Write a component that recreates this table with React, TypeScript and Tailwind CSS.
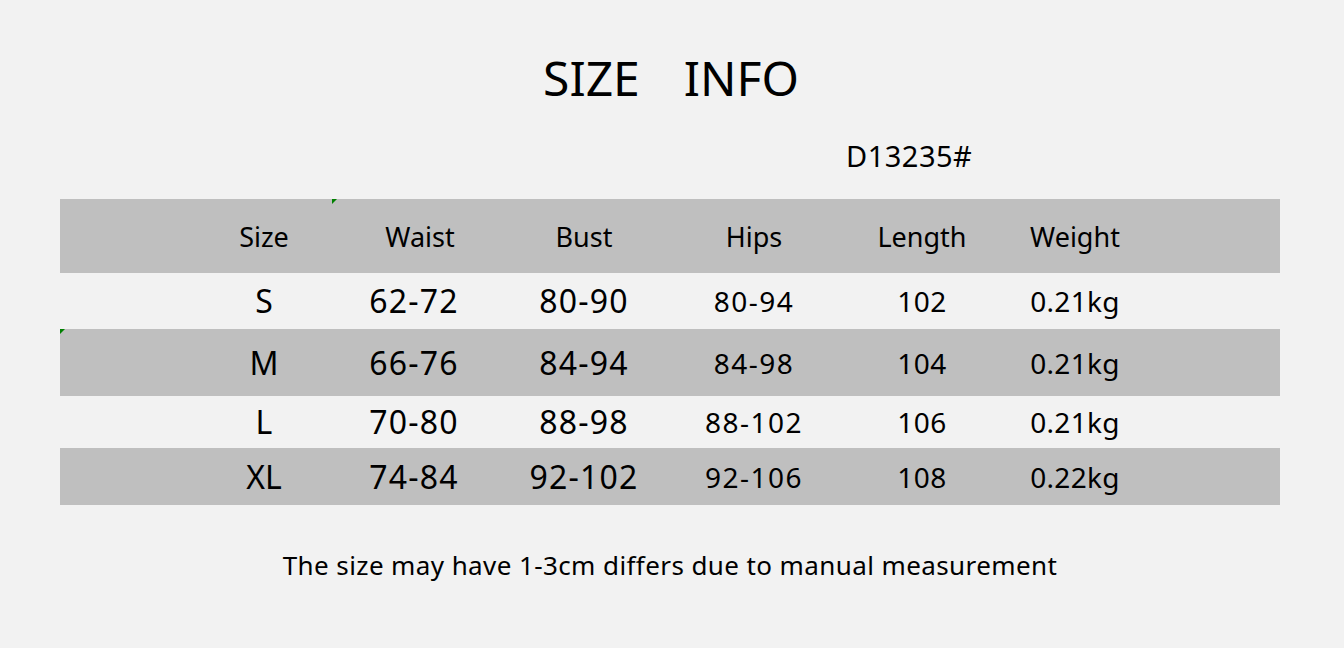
const rows = [
  { size: 'S', waist: '62-72', bust: '80-90', hips: '80-94', length: '102', weight: '0.21kg', h: 'h-[56px]', bg: '' },
  { size: 'M', waist: '66-76', bust: '84-94', hips: '84-98', length: '104', weight: '0.21kg', h: 'h-[67px]', bg: 'bg-[#bfbfbf]' },
  { size: 'L', waist: '70-80', bust: '88-98', hips: '88-102', length: '106', weight: '0.21kg', h: 'h-[52px]', bg: '' },
  { size: 'XL', waist: '74-84', bust: '92-102', hips: '92-106', length: '108', weight: '0.22kg', h: 'h-[57px]', bg: 'bg-[#bfbfbf]' },
];

const cols = 'grid grid-cols-[150px_150px_190px_150px_186px_120px] pl-[129px] items-center text-center';

export default function App() {
  return (
    <div className="w-[1344px] h-[648px] bg-[#f2f2f2] text-black font-['Noto_Sans','Liberation_Sans',sans-serif]">
      {/* title */}
      <div className="h-[116px] pt-[40px] flex justify-center items-center gap-[44px] text-[48px] leading-none pr-[2px]">
        <span>SIZE</span>
        <span>INFO</span>
      </div>

      <div className="h-[83px] pt-[20px] pl-[846px] text-[29px] leading-[40px] tracking-[0.5px]">D13235#</div>

      {/* table */}
      <div className="relative mx-[60px] w-[1220px]">
        <div className={`${cols} h-[74px] pt-[3px] bg-[#bfbfbf] text-[27px]`}>
          <div>Size</div>
          <div className="pl-[12px]">Waist</div>
          <div>Bust</div>
          <div>Hips</div>
          <div>Length</div>
          <div>Weight</div>
        </div>
        {rows.map((r) => (
          <div key={r.size} className={`${cols} ${r.h} ${r.bg}`}>
            <div className="text-[32px]">{r.size}</div>
            <div className="text-[32px] tracking-[1.2px]">{r.waist}</div>
            <div className="text-[32px] tracking-[1.2px]">{r.bust}</div>
            <div className="text-[28px] tracking-[1.5px]">{r.hips}</div>
            <div className="text-[28px] tracking-[0.5px]">{r.length}</div>
            <div className="text-[28px] tracking-[0.3px]">{r.weight}</div>
          </div>
        ))}
        {/* excel-style green corner marks */}
        <div className="absolute left-[272px] top-0 w-0 h-0 border-t-[5px] border-r-[5px] border-t-[#008000] border-r-transparent" />
        <div className="absolute left-0 top-[130px] w-0 h-0 border-t-[5px] border-r-[5px] border-t-[#008000] border-r-transparent" />
      </div>

      <div className="pt-[43px] text-center text-[26px] leading-[34px] tracking-[0.4px] pr-[4px]">
        The size may have 1-3cm differs due to manual measurement
      </div>
    </div>
  );
}
